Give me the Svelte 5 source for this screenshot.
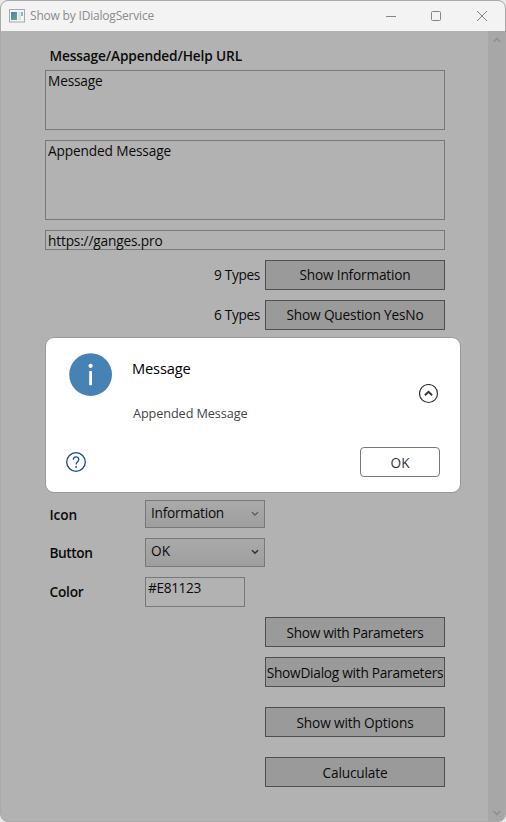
<script>
  function fit(node, width) {
    const natural = node.getBoundingClientRect().width;
    node.style.letterSpacing = `${(width - natural) / node.textContent.length}px`;
  }
</script>

{#snippet label(text, width)}<span class="label" use:fit={width}>{text}</span>{/snippet}

<div class="window">
  <header>
    <svg class="app" width="16" height="14" viewBox="0 0 16 14">
      <defs>
        <linearGradient id="pane" x1="0" y1="0" x2="0.6" y2="1">
          <stop offset="0" stop-color="#4f7fae" />
          <stop offset="1" stop-color="#58a883" />
        </linearGradient>
      </defs>
      <rect x="0.5" y="0.5" width="15" height="12.5" fill="#f2f4f6" stroke="#a4a9b0" />
      <rect x="2" y="3" width="6" height="8" fill="url(#pane)" />
      <rect x="9" y="3" width="3" height="8" fill="#dfe4e8" />
      <rect x="12" y="3" width="2" height="4" fill="#8fb5c8" />
    </svg>
    <span class="title">{@render label('Show by IDialogService', 124)}</span>
    <svg class="controls" width="102" height="12" viewBox="0 0 102 12" fill="none" stroke="#858585">
      <path d="M0 6.5H10" />
      <rect x="45.5" y="1.5" width="9" height="9" rx="1" />
      <path d="M91 1L101 11M101 1L91 11" />
    </svg>
  </header>

  <div class="body">
    <main>
      <div class="heading">{@render label('Message/Appended/Help URL', 192.5)}</div>
      <div class="field message">{@render label('Message', 54.5)}</div>
      <div class="field appended">{@render label('Appended Message', 123)}</div>
      <div class="field url">{@render label('https://ganges.pro', 114.5)}</div>

      <div class="action">
        <span class="count">{@render label('9 Types', 46)}</span>
        <button>{@render label('Show Information', 111)}</button>
      </div>
      <div class="action">
        <span class="count">{@render label('6 Types', 46)}</span>
        <button>{@render label('Show Question YesNo', 137)}</button>
      </div>

      <div class="options">
        <div class="row icon">
          <span class="name">{@render label('Icon', 27.5)}</span>
          <div class="select">
            {@render label('Information', 73)}
            <svg width="8" height="6" viewBox="0 0 8 6" fill="none" stroke="#555" stroke-width="1.2"><path d="M1 1.2L4 4.2L7 1.2" /></svg>
          </div>
        </div>
        <div class="row button">
          <span class="name">{@render label('Button', 43)}</span>
          <div class="select">
            {@render label('OK', 19)}
            <svg width="8" height="6" viewBox="0 0 8 6" fill="none" stroke="#333" stroke-width="1.6"><path d="M1 1.2L4 4.2L7 1.2" /></svg>
          </div>
        </div>
        <div class="row color">
          <span class="name">{@render label('Color', 34)}</span>
          <div class="field">{@render label('#E81123', 53)}</div>
        </div>
      </div>

      <div class="commands">
        <button>{@render label('Show with Parameters', 137)}</button>
        <button>{@render label('ShowDialog with Parameters', 176.5)}</button>
        <button class="apart">{@render label('Show with Options', 117)}</button>
        <button class="apart">{@render label('Caluculate', 65)}</button>
      </div>
    </main>

    <div class="scrollbar">
      <svg width="8" height="6" viewBox="0 0 8 6" fill="none" stroke="#8e8e8e" stroke-width="1.3"><path d="M0.7 5L4 1.3L7.3 5" /></svg>
      <svg width="8" height="6" viewBox="0 0 8 6" fill="none" stroke="#8e8e8e" stroke-width="1.3"><path d="M0.7 1L4 4.7L7.3 1" /></svg>
    </div>
  </div>

  <section class="dialog">
    <div class="top">
      <svg class="info" width="44" height="44" viewBox="0 0 44 44">
        <circle cx="21.6" cy="21.6" r="21.4" fill="#4682b4" />
        <circle cx="21.6" cy="12.8" r="2.1" fill="#fff" />
        <rect x="20.2" y="18" width="2.8" height="14.2" rx="0.7" fill="#fff" />
      </svg>
      <div class="texts">
        <div class="main">{@render label('Message', 58.5)}</div>
        <div class="sub">{@render label('Appended Message', 114.5)}</div>
      </div>
      <svg class="expander" width="20" height="20" viewBox="0 0 20 20" fill="none" stroke="#333">
        <circle cx="9.5" cy="9.5" r="9" stroke-width="1.2" />
        <path d="M5.9 11.2L9.5 7.8L13.1 11.2" stroke-width="2" />
      </svg>
    </div>
    <div class="bottom">
      <svg class="help" width="20" height="20" viewBox="0 0 20 20" fill="none" stroke="#134a96" stroke-width="1.3">
        <circle cx="10" cy="10" r="9.3" />
        <path d="M7.3 7.8C7.3 4.1 12.8 4.1 12.8 7.4C12.8 9.6 10.1 9.8 10.1 12.5" />
        <circle cx="10.1" cy="15" r="0.9" fill="#134a96" stroke="none" />
      </svg>
      <button class="ok">{@render label('OK', 19)}</button>
    </div>
  </section>
</div>

<style>
  :global(body) {
    margin: 0;
    background: #e9e9e9;
  }
  .window {
    position: relative;
    box-sizing: border-box;
    width: 506px;
    height: 822px;
    display: flex;
    flex-direction: column;
    overflow: hidden;
    border: 1px solid #aaa;
    border-radius: 8px;
    background: #b2b2b2;
    color: #0b0b0b;
    font: 13.7px/19px 'Open Sans', 'Noto Sans', sans-serif;
  }
  .label {
    display: inline-block;
    white-space: pre;
  }
  header {
    flex: none;
    height: 30px;
    display: flex;
    align-items: center;
    background: #f3f3f3;
    color: #8c8c8c;
    font-size: 12px;
  }
  .app {
    margin-left: 8px;
    margin-bottom: 1px;
  }
  .title {
    margin-left: 5px;
    padding-bottom: 1px;
  }
  .controls {
    margin: 0 17px 1px auto;
  }
  .body {
    flex: 1;
    display: flex;
    min-height: 0;
  }
  main {
    flex: 1;
    padding: 15px 43px 0 44px;
  }
  .heading {
    height: 24px;
    padding-left: 4.5px;
    font-weight: 600;
  }
  .field {
    box-sizing: border-box;
    padding: 0 2px;
    border: 1px solid #77787a;
  }
  .message {
    height: 60px;
    margin-bottom: 10px;
  }
  .appended {
    height: 80px;
    margin-bottom: 10px;
  }
  .url {
    height: 20px;
  }
  .action {
    display: flex;
    justify-content: flex-end;
    align-items: center;
    gap: 5px;
    margin-top: 10px;
  }
  .count {
    padding-bottom: 1px;
  }
  button {
    box-sizing: border-box;
    width: 180px;
    height: 30px;
    padding: 0 0 1px;
    display: flex;
    align-items: center;
    justify-content: center;
    border: 1px solid #4f4f4f;
    border-radius: 0;
    background: #9a9a9a;
    color: #0b0b0b;
    font: inherit;
  }
  .options {
    margin-top: 170px;
    display: flex;
    flex-direction: column;
    gap: 10px;
  }
  .row {
    display: flex;
  }
  .name {
    box-sizing: border-box;
    width: 100px;
    padding: 5px 0 0 4.5px;
    font-weight: 600;
  }
  .icon {
    height: 28px;
  }
  .button {
    height: 29px;
  }
  .color {
    height: 30px;
  }
  .color .field {
    width: 100px;
  }
  .select {
    box-sizing: border-box;
    width: 120px;
    padding: 2px 5px 0;
    display: flex;
    justify-content: space-between;
    align-items: flex-start;
    border: 1px solid #77787a;
    background: linear-gradient(#aaa, #9e9e9e);
  }
  .select svg {
    margin-top: 8px;
  }
  .commands {
    display: flex;
    flex-direction: column;
    align-items: flex-end;
    gap: 10px;
    margin-top: 10px;
  }
  .commands button,
  .ok {
    padding: 1px 0 0;
  }
  .apart {
    margin-top: 10px;
  }
  .scrollbar {
    width: 17px;
    box-sizing: border-box;
    padding: 6px 0 5px;
    display: flex;
    flex-direction: column;
    justify-content: space-between;
    align-items: center;
    background: #a7a7a7;
  }
  .dialog {
    position: absolute;
    left: 44px;
    top: 336px;
    width: 416px;
    height: 156px;
    box-sizing: border-box;
    border: 1px solid #999;
    border-radius: 9px;
    background: #fff;
    padding: 15px 20px 0;
  }
  .top {
    display: flex;
    align-items: flex-start;
    height: 94px;
  }
  .info {
    margin-left: 3px;
  }
  .texts {
    flex: 1;
    padding: 4px 0 0 19px;
  }
  .main {
    font-size: 14.7px;
    line-height: 22px;
    color: #000;
  }
  .sub {
    margin-top: 25px;
    padding-left: 1px;
    font-size: 12.7px;
    line-height: 18px;
    color: #444;
  }
  .expander {
    margin: 31px 1px 0 0;
  }
  .bottom {
    display: flex;
    justify-content: space-between;
    align-items: center;
  }
  .ok {
    width: 80px;
    border: 1px solid #777;
    border-radius: 4px;
    background: #fff;
    color: #333;
  }
</style>
